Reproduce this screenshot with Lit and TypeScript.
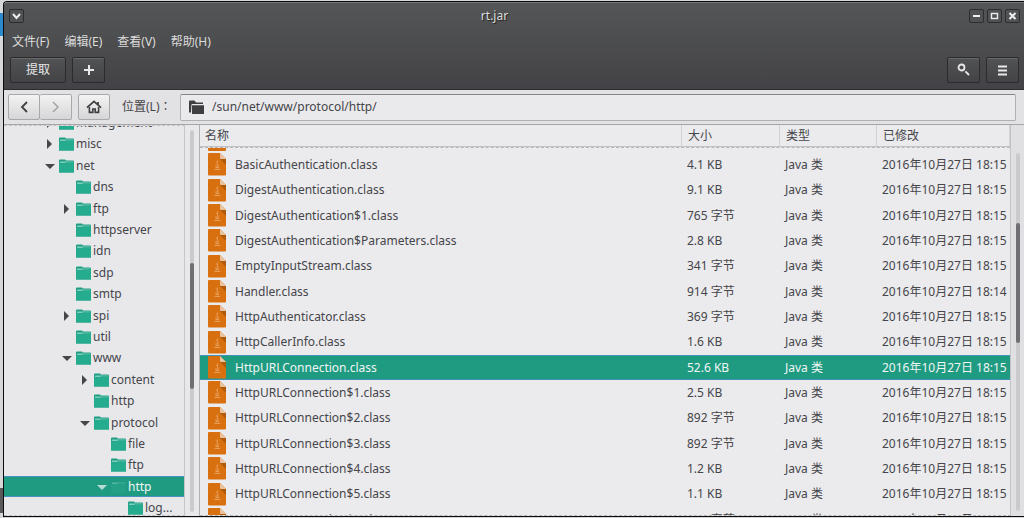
import { LitElement, html, css, svg, nothing } from "lit";
import { customElement } from "lit/decorators.js";
import { classMap } from "lit/directives/class-map.js";

interface TreeNode {
  name: string;
  depth: number;
  arrow?: "open" | "closed";
  selected?: boolean;
}

const TREE: TreeNode[] = [
  { name: "management", depth: 0, arrow: "closed" },
  { name: "misc", depth: 0, arrow: "closed" },
  { name: "net", depth: 0, arrow: "open" },
  { name: "dns", depth: 1 },
  { name: "ftp", depth: 1, arrow: "closed" },
  { name: "httpserver", depth: 1 },
  { name: "idn", depth: 1 },
  { name: "sdp", depth: 1 },
  { name: "smtp", depth: 1 },
  { name: "spi", depth: 1, arrow: "closed" },
  { name: "util", depth: 1 },
  { name: "www", depth: 1, arrow: "open" },
  { name: "content", depth: 2, arrow: "closed" },
  { name: "http", depth: 2 },
  { name: "protocol", depth: 2, arrow: "open" },
  { name: "file", depth: 3 },
  { name: "ftp", depth: 3 },
  { name: "http", depth: 3, arrow: "open", selected: true },
  { name: "log...", depth: 4 },
];

const DAY = "2016年10月27日 ";
const FILES: [string, string, string][] = [
  ["BasicAuthentication.class", "4.1 KB", "18:15"],
  ["DigestAuthentication.class", "9.1 KB", "18:15"],
  ["DigestAuthentication$1.class", "765 字节", "18:15"],
  ["DigestAuthentication$Parameters.class", "2.8 KB", "18:15"],
  ["EmptyInputStream.class", "341 字节", "18:15"],
  ["Handler.class", "914 字节", "18:14"],
  ["HttpAuthenticator.class", "369 字节", "18:15"],
  ["HttpCallerInfo.class", "1.6 KB", "18:15"],
  ["HttpURLConnection.class", "52.6 KB", "18:15"],
  ["HttpURLConnection$1.class", "2.5 KB", "18:15"],
  ["HttpURLConnection$2.class", "892 字节", "18:15"],
  ["HttpURLConnection$3.class", "892 字节", "18:15"],
  ["HttpURLConnection$4.class", "1.2 KB", "18:15"],
  ["HttpURLConnection$5.class", "1.1 KB", "18:15"],
  ["HttpURLConnection$6.class", "967 字节", "18:15"],
];
const SELECTED_FILE = "HttpURLConnection.class";

const icon = (w: number, h: number, body: unknown) =>
  html`<svg width=${w} height=${h} viewBox="0 0 ${w} ${h}" aria-hidden="true">${body}</svg>`;

const folderIcon = (selected: boolean) =>
  icon(15, 14, svg`
    <path d="M0 1.5Q0 .5 1 .5H6L7 1.4H14Q15 1.4 15 2.4V13.4H0Z" fill=${selected ? "#1c9a80" : "#209d83"}/>
    <path d="M1 2.4H14.4V3.4H7L6 4H1Z" fill=${selected ? "#58b7a3" : "#7fcfbd"}/>
    <path d="M0 4.2H6.2L7.2 3.4H15V13.4H0Z" fill=${selected ? "#23a086" : "#25ab8e"}/>`);

const classIcon = icon(18, 23, svg`
  <path d="M1 0H12L18 6V21.5Q18 22.5 17 22.5H1Q0 22.5 0 21.5V1Q0 0 1 0Z" fill="#d9700f"/>
  <path d="M12 6H18V12Z" fill="#b05a0c"/>
  <path d="M12 0L18 6H13Q12 6 12 5Z" fill="#e8c3a0"/>
  <path d="M9.8 7.5Q8.2 9 9.4 10.4Q10 11.3 9.4 12.2" fill="none" stroke="#efb884" stroke-width=".8"/>
  <path d="M7.2 13H11.2M7.6 14.6H11M6.4 16.4H12.4" fill="none" stroke="#efb884" stroke-width=".7"/>`);

const arrowIcon = (kind: string) =>
  kind === "open"
    ? icon(10, 10, svg`<path d="M0 3H10L5 8Z" fill="currentColor"/>`)
    : icon(10, 10, svg`<path d="M2 0L7 5L2 10Z" fill="currentColor"/>`);

@customElement("app-root")
export class AppRoot extends LitElement {
  static styles = css`
    :host {
      display: block;
      height: 100vh;
      box-sizing: border-box;
      padding: 1px 0 1px 3px;
      overflow: hidden;
      background:
        linear-gradient(#2a8acb, #2a8acb) 0 13px / 3px 23px no-repeat,
        linear-gradient(#58595a, #58595a) 0 488px / 3px 25px no-repeat,
        #d6d7d8;
      color: #45454a;
      font: 12px/20px "Noto Sans", "Noto Sans CJK SC", sans-serif;
    }
    * { box-sizing: border-box; }
    button { font: inherit; padding: 0; margin: 0; }
    svg { display: block; flex: none; }
    .window {
      height: 100%;
      display: flex;
      flex-direction: column;
      border: 1px solid #0c0c0c;
      border-right: 0;
      border-radius: 4px 0 0 0;
      background: #e8e8ea;
      overflow: hidden;
    }
    .head {
      flex: none;
      height: 88px;
      display: flex;
      flex-direction: column;
      background: linear-gradient(#535556, #4d4e4f 40%, #434246);
      border-top: 1px solid #737576;
      border-bottom: 1px solid #2f2c31;
      color: #dcdcdc;
    }
    .title {
      display: grid;
      grid-template-columns: 1fr auto 1fr;
      align-items: center;
      height: 26px;
      padding: 0 4px 0 5px;
    }
    .title h1 {
      margin: 0;
      padding-right: 40px;
      font: inherit;
      text-shadow: 1px 1px 1px #222;
    }
    .winbtns { display: flex; gap: 3px; justify-content: flex-end; }
    .winbtn {
      width: 15px;
      height: 14px;
      display: grid;
      place-items: center;
      border: 1px solid #2d2d2f;
      border-radius: 2px;
      background: #505253;
      color: #eee;
    }
    .menu { display: flex; gap: 15px; padding: 2px 8px; height: 26px; }
    .menu button { border: 0; background: none; color: inherit; line-height: 22px; }
    .tools { display: flex; gap: 6px; padding: 2px 5px 0 6px; }
    .tool {
      width: 33px;
      height: 26px;
      display: grid;
      place-items: center;
      border: 1px solid #2b2a2d;
      border-radius: 2px;
      background: linear-gradient(#525355, #434346);
      box-shadow: inset 0 1px #68696b;
      color: #e8e8e8;
    }
    .tool.wide { width: 56px; }
    .spacer { flex: 1; }
    .location {
      flex: none;
      display: flex;
      align-items: center;
      height: 35px;
      padding: 0 8px 0 4px;
      background: #e2e1e4;
      border-bottom: 1px solid #a6a6a9;
    }
    .nav { display: flex; margin-right: 6px; }
    .navbtn {
      width: 32px;
      height: 26px;
      display: grid;
      place-items: center;
      border: 1px solid #a9a9ab;
      border-radius: 2px;
      background: linear-gradient(#f3f3f3, #d6d6d8);
      color: #3f3f42;
    }
    .navbtn + .navbtn { border-left: 0; color: #a5a5a8; }
    .location label {
      margin: 0 7px 0 12px;
      width: 51px;
      white-space: nowrap;
      font-family: "Noto Sans", "Noto Sans CJK TC", sans-serif;
    }
    .entry {
      flex: 1;
      display: flex;
      align-items: center;
      gap: 7px;
      height: 27px;
      padding: 0 8px;
      border: 1px solid #b0b0b3;
      border-top-color: #858588;
      border-radius: 2px;
      background: #eaeaec;
    }
    .entry input {
      flex: 1;
      min-width: 0;
      border: 0;
      padding: 0;
      outline: 0;
      background: none;
      color: inherit;
      font: inherit;
    }
    .body { flex: 1; min-height: 0; display: flex; }
    .side { flex: none; width: 196px; display: flex; border-right: 1px solid #b0b0b3; }
    .tree {
      flex: 1;
      min-width: 0;
      display: flex;
      flex-direction: column;
      justify-content: flex-end;
      overflow: hidden;
      list-style: none;
      margin: 0;
      padding: 0;
      border-top: 1px dashed #c2c2c5;
      border-bottom: 1px dashed #c2c2c5;
      border-right: 1px solid #c6c6c9;
    }
    .node {
      flex: none;
      height: 21px;
      display: flex;
      align-items: center;
      gap: 2px;
      padding-left: 41px;
      line-height: 20px;
    }
    .node:nth-child(5n + 2), .node:nth-child(5n + 4) { height: 22px; }
    .node:last-child { margin-bottom: -4px; }
    .node.d1 { padding-left: 58px; }
    .node.d2 { padding-left: 76px; }
    .node.d3 { padding-left: 93px; }
    .node.d4 { padding-left: 110px; }
    .node.selected { background: #1f9b81; color: #f0f6f4; box-shadow: inset 0 1px #4a90c0, inset 0 -1px #4a90c0; }
    .twist { width: 12px; flex: none; }
    .selected .twist { color: #b7dcd3; }
    .side .bar { width: 14px; }
    .bar { flex: none; width: 13px; padding: 5px 5px 4px; display: flex; }
    .track { flex: 1; border-radius: 3px; background: #cacacd; }
    .thumb { border-radius: 3px; background: #6f6f73; }
    .side .thumb { margin-top: 133px; height: 126px; }
    .main .thumb { margin-top: 70px; height: 120px; }
    .main { flex: 1; min-width: 0; display: flex; }
    .main .bar { padding: 28px 4px 5px 5px; background: #e0e0e2; }
    .list {
      flex: 1;
      min-width: 0;
      overflow: hidden;
      border-right: 1px solid #c2c2c5;
      border-bottom: 1px dashed #b5b5b8;
      background: #ebebed;
    }
    table { width: 100%; border-collapse: separate; border-spacing: 0; table-layout: fixed; }
    th, td { padding: 0; text-align: left; font-weight: 400; white-space: nowrap; }
    th { height: 22px; padding: 0 5px; line-height: 20px; border-bottom: 1px solid #c2c2c5; border-right: 1px solid #d2d2d5; background: #ebebed; }
    th + th { padding-left: 6px; }
    .size { width: 98px; }
    .kind { width: 97px; }
    .date { width: 133px; }
    .cut td { height: 5px; padding: 0 0 1px 8px; border-top: 1px dashed #b5b5b8; }
    .sliver { width: 18px; height: 3px; background: #d9700f; border-radius: 0 0 1px 1px; }
    .row td { height: 25px; line-height: 20px; padding-left: 5px; }
    .row:nth-child(3n) td { height: 26px; }
    .row td:first-child { padding-left: 8px; }
    .row.selected td { background: #1f9b81; color: #f0f6f4; box-shadow: inset 0 1px #3f93b5, inset 0 -1px #3f93b5; }
    .file { display: flex; align-items: center; gap: 9px; height: 23px; }
  `;

  render() {
    return html`
      <div class="window">
        <header class="head">
          <div class="title">
            <div><button class="winbtn" aria-label="Window menu">${icon(9, 8, svg`<path d="M1 2L4.5 6L8 2" fill="none" stroke="currentColor" stroke-width="2"/>`)}</button></div>
            <h1>rt.jar</h1>
            <div class="winbtns">
              <button class="winbtn" aria-label="Minimize">${icon(9, 8, svg`<path d="M1 4H8" stroke="currentColor" stroke-width="2"/>`)}</button>
              <button class="winbtn" aria-label="Maximize">${icon(9, 8, svg`<rect x="1.5" y="1.5" width="6" height="5" fill="none" stroke="currentColor" stroke-width="1.4"/>`)}</button>
              <button class="winbtn" aria-label="Close">${icon(9, 8, svg`<path d="M1.5 1L7.5 7M7.5 1L1.5 7" stroke="currentColor" stroke-width="2"/>`)}</button>
            </div>
          </div>
          <nav class="menu">
            ${["文件(F)", "编辑(E)", "查看(V)", "帮助(H)"].map((m) => html`<button>${m}</button>`)}
          </nav>
          <div class="tools">
            <button class="tool wide">提取</button>
            <button class="tool" aria-label="Add">${icon(10, 10, svg`<path d="M5 0V10M0 5H10" stroke="currentColor" stroke-width="2"/>`)}</button>
            <span class="spacer"></span>
            <button class="tool" aria-label="Search">${icon(14, 14, svg`<circle cx="4.5" cy="4.5" r="3" fill="none" stroke="currentColor" stroke-width="1.8"/><path d="M8.4 8.4L12 12" stroke="currentColor" stroke-width="1.8"/>`)}</button>
            <button class="tool" aria-label="Menu">${icon(9, 11, svg`<path d="M0 1.5H9M0 5.5H9M0 9.5H9" stroke="currentColor" stroke-width="2"/>`)}</button>
          </div>
        </header>
        <div class="location">
          <div class="nav">
            <button class="navbtn" aria-label="Back">${icon(8, 12, svg`<path d="M7 1L2 6L7 11" fill="none" stroke="currentColor" stroke-width="1.8"/>`)}</button>
            <button class="navbtn" aria-label="Forward">${icon(8, 12, svg`<path d="M1 1L6 6L1 11" fill="none" stroke="currentColor" stroke-width="1.5"/>`)}</button>
          </div>
          <button class="navbtn home" aria-label="Home">${icon(16, 14, svg`<path d="M1 7.6L8 1.4L15 7.6M12 2V5" fill="none" stroke="currentColor" stroke-width="1.8"/><path d="M3.4 7V12.4H6.8V9H9.2V12.4H12.6V7" fill="none" stroke="currentColor" stroke-width="1.6"/>`)}</button>
          <label for="path">位置(L)<span lang="zh-TW">：</span></label>
          <div class="entry">
            ${icon(16, 15, svg`<path d="M0 1.5Q0 .5 1 .5H5.5L7 2.5H14V4H3.5Q2.5 4 2.4 5L2 12.5H0Z" fill="#3f3f42"/><path d="M3 5.2H15V14H3Z" fill="#3f3f42"/>`)}
            <input id="path" type="text" value="/sun/net/www/protocol/http/" />
          </div>
        </div>
        <div class="body">
          <aside class="side">
            <ul class="tree">
              ${TREE.map((n) => html`
                <li class=${classMap({ node: true, [`d${n.depth}`]: true, selected: !!n.selected })}>
                  <span class="twist">${n.arrow ? arrowIcon(n.arrow) : nothing}</span>
                  ${folderIcon(!!n.selected)}<span>${n.name}</span>
                </li>`)}
            </ul>
            <div class="bar"><div class="track"><div class="thumb"></div></div></div>
          </aside>
          <main class="main">
            <div class="list">
              <table>
                <thead>
                  <tr><th>名称</th><th class="size">大小</th><th class="kind">类型</th><th class="date">已修改</th></tr>
                </thead>
                <tbody>
                  <tr class="cut"><td colspan="4"><div class="sliver"></div></td></tr>
                  ${FILES.map(([name, size, time]) => html`
                    <tr class=${classMap({ row: true, selected: name === SELECTED_FILE })}>
                      <td><div class="file">${classIcon}<span>${name}</span></div></td>
                      <td>${size}</td>
                      <td>Java 类</td>
                      <td>${DAY}${time}</td>
                    </tr>`)}
                </tbody>
              </table>
            </div>
            <div class="bar"><div class="track"><div class="thumb"></div></div></div>
          </main>
        </div>
      </div>
    `;
  }
}
